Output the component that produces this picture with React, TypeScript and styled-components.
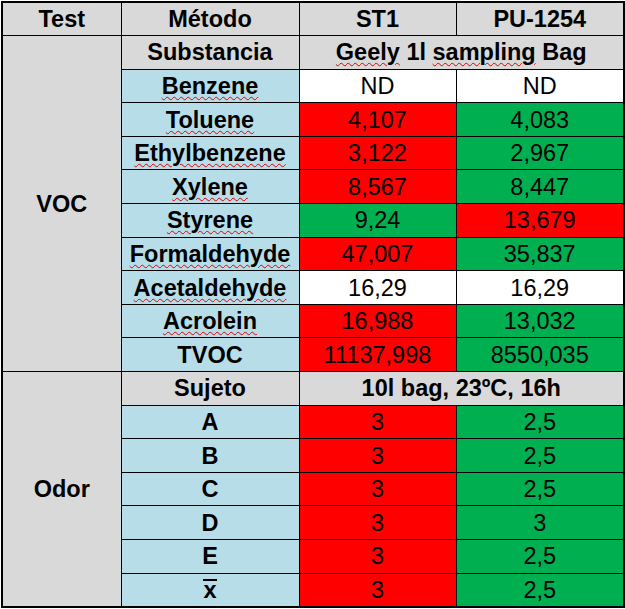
import React from 'react';
import styled, { createGlobalStyle } from 'styled-components';

const GlobalStyle = createGlobalStyle`
  html, body {
    margin: 0;
    padding: 0;
    background: #fff;
  }
  body {
    font-family: 'Liberation Sans', Arial, sans-serif;
    color: #000;
  }
`;

type Tone = 'white' | 'red' | 'green' | 'gray' | 'blue';

const tones: Record<Tone, string> = {
  white: '#ffffff',
  red: '#ff0000',
  green: '#00b050',
  gray: '#d9d9d9',
  blue: '#b7dee8',
};

const vocRows: { name: string; st1: string; pu: string; a: Tone; b: Tone; typo?: boolean }[] = [
  { name: 'Benzene', st1: 'ND', pu: 'ND', a: 'white', b: 'white', typo: true },
  { name: 'Toluene', st1: '4,107', pu: '4,083', a: 'red', b: 'green', typo: true },
  { name: 'Ethylbenzene', st1: '3,122', pu: '2,967', a: 'red', b: 'green', typo: true },
  { name: 'Xylene', st1: '8,567', pu: '8,447', a: 'red', b: 'green', typo: true },
  { name: 'Styrene', st1: '9,24', pu: '13,679', a: 'green', b: 'red', typo: true },
  { name: 'Formaldehyde', st1: '47,007', pu: '35,837', a: 'red', b: 'green', typo: true },
  { name: 'Acetaldehyde', st1: '16,29', pu: '16,29', a: 'white', b: 'white', typo: true },
  { name: 'Acrolein', st1: '16,988', pu: '13,032', a: 'red', b: 'green', typo: true },
  { name: 'TVOC', st1: '11137,998', pu: '8550,035', a: 'red', b: 'green' },
];

const odorRows: { name: string; st1: string; pu: string; mean?: boolean }[] = [
  { name: 'A', st1: '3', pu: '2,5' },
  { name: 'B', st1: '3', pu: '2,5' },
  { name: 'C', st1: '3', pu: '2,5' },
  { name: 'D', st1: '3', pu: '3' },
  { name: 'E', st1: '3', pu: '2,5' },
  { name: 'x', st1: '3', pu: '2,5', mean: true },
];

const App = () => {
  return (
    <>
      <GlobalStyle />
      <Page>
        <Table>
          <colgroup>
            <col style={{ width: 119 }} />
            <col style={{ width: 178 }} />
            <col style={{ width: 157 }} />
            <col style={{ width: 168 }} />
          </colgroup>
          <tbody>
            <Row>
              <Cell $tone="gray" $bold>Test</Cell>
              <Cell $tone="gray" $bold>Método</Cell>
              <Cell $tone="gray" $bold>ST1</Cell>
              <Cell $tone="gray" $bold>PU-1254</Cell>
            </Row>
            <Row>
              <Cell $tone="gray" $bold rowSpan={vocRows.length + 1}>VOC</Cell>
              <Cell $tone="gray" $bold>Substancia</Cell>
              <Cell $tone="gray" $bold colSpan={2}>
                <Typo>Geely</Typo> 1l <Typo>sampling</Typo> Bag
              </Cell>
            </Row>
            {vocRows.map((r) => (
              <Row key={r.name}>
                <Cell $tone="blue" $bold>{r.typo ? <Typo>{r.name}</Typo> : r.name}</Cell>
                <Cell $tone={r.a}>{r.st1}</Cell>
                <Cell $tone={r.b}>{r.pu}</Cell>
              </Row>
            ))}
            <Row>
              <Cell $tone="gray" $bold rowSpan={odorRows.length + 1}>Odor</Cell>
              <Cell $tone="gray" $bold>Sujeto</Cell>
              <Cell $tone="gray" $bold colSpan={2}>10l bag, 23ºC, 16h</Cell>
            </Row>
            {odorRows.map((r) => (
              <Row key={r.name}>
                <Cell $tone="blue" $bold>{r.mean ? <Mean>{r.name}</Mean> : r.name}</Cell>
                <Cell $tone="red">{r.st1}</Cell>
                <Cell $tone="green">{r.pu}</Cell>
              </Row>
            ))}
          </tbody>
        </Table>
      </Page>
    </>
  );
};

const Page = styled.div`
  padding: 1px 0 0 1px;
`;

const Table = styled.table`
  border-collapse: collapse;
  table-layout: fixed;
  width: 623px;
  border: 2px solid #000;
`;

const Row = styled.tr`
  height: 33.6px;
`;

const Cell = styled.td<{ $tone: Tone; $bold?: boolean }>`
  border: 1px solid #000;
  background: ${(p) => tones[p.$tone]};
  font-family: 'Liberation Sans', Arial, sans-serif;
  font-size: 23.5px;
  font-weight: ${(p) => (p.$bold ? 700 : 400)};
  text-align: center;
  vertical-align: middle;
  padding: 0;
  line-height: 24px;
  white-space: nowrap;
  overflow: hidden;
`;

const Typo = styled.span`
  text-decoration: underline wavy #e00000;
  text-decoration-thickness: 1px;
  text-underline-offset: 2px;
`;

const Mean = styled.span`
  display: inline-block;
  line-height: 17px;
  border-top: 2px solid #000;
  padding-top: 1px;
`;

export default App;
